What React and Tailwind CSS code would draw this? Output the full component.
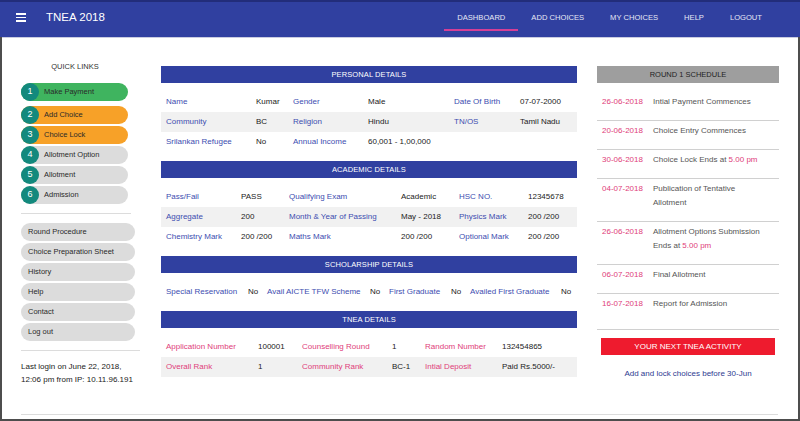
import React from 'react';

const font = { fontFamily: '"Liberation Sans", Arial, sans-serif' };

const navItems = ['DASHBOARD', 'ADD CHOICES', 'MY CHOICES', 'HELP', 'LOGOUT'];

const quickLinks = [
  { n: 1, label: 'Make Payment', bg: 'bg-[#3fb45f]' },
  { n: 2, label: 'Add Choice', bg: 'bg-[#f7a128]' },
  { n: 3, label: 'Choice Lock', bg: 'bg-[#f7a128]' },
  { n: 4, label: 'Allotment Option', bg: 'bg-[#dcdcdc]' },
  { n: 5, label: 'Allotment', bg: 'bg-[#dcdcdc]' },
  { n: 6, label: 'Admission', bg: 'bg-[#dcdcdc]' },
];

const otherLinks = ['Round Procedure', 'Choice Preparation Sheet', 'History', 'Help', 'Contact', 'Log out'];

const personal = [
  ['Name', 'Kumar', 'Gender', 'Male', 'Date Of Birth', '07-07-2000'],
  ['Community', 'BC', 'Religion', 'Hindu', 'TN/OS', 'Tamil Nadu'],
  ['Srilankan Refugee', 'No', 'Annual Income', '60,001 - 1,00,000', '', ''],
];

const academic = [
  ['Pass/Fail', 'PASS', 'Qualifying Exam', 'Academic', 'HSC NO.', '12345678'],
  ['Aggregate', '200', 'Month & Year of Passing', 'May - 2018', 'Physics Mark', '200 /200'],
  ['Chemistry Mark', '200 /200', 'Maths Mark', '200 /200', 'Optional Mark', '200 /200'],
];

const scholarship = [
  ['Special Reservation', 'No', 'Avail AICTE TFW Scheme', 'No', 'First Graduate', 'No', 'Availed First Graduate', 'No'],
];

const tnea = [
  ['Application Number', '100001', 'Counselling Round', '1', 'Random Number', '132454865'],
  ['Overall Rank', '1', 'Community Rank', 'BC-1', 'Intial Deposit', 'Paid Rs.5000/-'],
];

const schedule = [
  ['26-06-2018', ['Intial Payment Commences']],
  ['20-06-2018', ['Choice Entry Commences']],
  ['30-06-2018', ['Choice Lock Ends at ', <span key="t" className="text-[#e0407a]">5.00 pm</span>]],
  ['04-07-2018', ['Publication of Tentative', <br key="b" />, 'Allotment']],
  ['26-06-2018', ['Allotment Options Submission', <br key="b" />, 'Ends at ', <span key="t" className="text-[#e0407a]">5.00 pm</span>]],
  ['06-07-2018', ['Final Allotment']],
  ['16-07-2018', ['Report for Admission']],
];

function SectionHeader({ title }) {
  return (
    <div className="h-[17px] bg-[#3040a0] text-white text-[7.5px] flex items-center justify-center tracking-[0.1px]">
      {title}
    </div>
  );
}

function Section({ title, rows, cols, labelColor }) {
  return (
    <div className="mb-[9px]">
      <SectionHeader title={title} />
      <div className="mt-[9px]">
        {rows.map((row, i) => (
          <div key={i} className={`grid ${cols} h-[20px] items-center ${i % 2 === 1 ? 'bg-[#f1f1f1]' : ''}`}>
            {row.map((cell, j) => (
              <div key={j} className={`pl-[5px] whitespace-nowrap text-[8px] ${j % 2 === 0 ? labelColor : 'text-[#222]'}`}>
                {cell}
              </div>
            ))}
          </div>
        ))}
      </div>
    </div>
  );
}

export default function App() {
  return (
    <div className="w-[800px] h-[421px] bg-white flex flex-col overflow-hidden" style={font}>
      <header className="h-[37px] shrink-0 bg-[#3040a0] border-t-2 border-[#222d7a] flex items-start shadow-[0_1px_0_#c9cce0]">
        <div className="flex items-center h-[31px] pl-[16px]">
          <div className="flex flex-col gap-[2px] w-[10px]">
            <span className="h-[1.5px] bg-white" />
            <span className="h-[1.5px] bg-white" />
            <span className="h-[1.5px] bg-white" />
          </div>
          <span className="ml-[20px] text-white text-[11.5px]">TNEA 2018</span>
        </div>
        <nav className="ml-auto mr-[25px] flex">
          {navItems.map((item, i) => (
            <div
              key={item}
              className={`px-[13px] pt-[10px] pb-[5px] leading-[12px] text-[7.6px] text-[#e6e8f5] border-b-2 ${i === 0 ? 'border-[#d43f96]' : 'border-transparent'}`}
            >
              {item}
            </div>
          ))}
        </nav>
      </header>

      <div className="flex-1 flex flex-col border-x-2 border-b-2 border-[#4d4d4d]">
        <div className="flex-1 flex pl-[19px]">
          <aside className="w-[120px] pt-[23px]">
            <div className="text-center pr-[12px] text-[7.5px] leading-[14px] text-[#333] mb-[9px]">QUICK LINKS</div>
            <div className="w-[107px] flex flex-col gap-[2px]">
              {quickLinks.map((q, i) => (
                <div key={q.n} className={`h-[18px] rounded-full ${q.bg} flex items-center ${i === 0 ? 'mb-[3px]' : ''}`}>
                  <span className="w-[18px] h-[18px] rounded-full bg-[#13897d] text-white text-[9px] flex items-center justify-center">
                    {q.n}
                  </span>
                  <span className="ml-[5px] text-[7.5px] text-[#2a2a2a]">{q.label}</span>
                </div>
              ))}
            </div>
            <div className="mt-[9px] w-[110px] border-t border-[#dcdcdc]" />
            <div className="mt-[9px] w-[114px] flex flex-col gap-[2px]">
              {otherLinks.map((l) => (
                <div key={l} className="h-[18px] rounded-full bg-[#dcdcdc] flex items-center pl-[7px] text-[7.5px] text-[#2a2a2a]">
                  {l}
                </div>
              ))}
            </div>
            <div className="mt-[9px] w-[119px] border-t border-[#dcdcdc]" />
            <div className="mt-[9px] text-[8px] leading-[13px] text-[#222]">
              Last login on June 22, 2018,
              <br />
              12:06 pm from IP: 10.11.96.191
            </div>
          </aside>

          <main className="ml-[20px] w-[416px] pt-[29px]">
            <Section
              title="PERSONAL DETAILS"
              rows={personal}
              cols="grid-cols-[90px_37px_75px_86px_66px_62px]"
              labelColor="text-[#3d4db0]"
            />
            <Section
              title="ACADEMIC DETAILS"
              rows={academic}
              cols="grid-cols-[75px_48px_112px_58px_69px_54px]"
              labelColor="text-[#3d4db0]"
            />
            <Section
              title="SCHOLARSHIP DETAILS"
              rows={scholarship}
              cols="grid-cols-[82px_19px_103px_19px_62px_19px_91px_21px]"
              labelColor="text-[#3d4db0]"
            />
            <Section
              title="TNEA DETAILS"
              rows={tnea}
              cols="grid-cols-[92px_44px_90px_33px_77px_80px]"
              labelColor="text-[#e0407a]"
            />
          </main>

          <section className="ml-[20px] w-[182px] pt-[29px]">
            <div className="h-[17px] bg-[#9e9e9e] text-[#1f1f1f] text-[7.5px] flex items-center justify-center">
              ROUND 1 SCHEDULE
            </div>
            <div className="mt-[9px]">
              {schedule.map(([date, text], i) => (
                <div
                  key={i}
                  className={`flex pl-[5px] pt-[3px] text-[8px] leading-[14px] ${i === 0 ? '' : 'border-t border-[#d0d0d0]'} ${i === schedule.length - 1 ? 'pb-[18px]' : 'pb-[11px]'}`}
                >
                  <span className="w-[51px] shrink-0 text-[#e0407a]">{date}</span>
                  <span className="text-[#555]">{text}</span>
                </div>
              ))}
            </div>
            <div className="border-t border-[#d0d0d0]" />
            <div className="mt-[8px] mx-[4px] h-[17px] bg-[#ee1b2e] text-white text-[8px] flex items-center justify-center">
              YOUR NEXT TNEA ACTIVITY
            </div>
            <div className="mt-[13px] text-center text-[8px] text-[#2d3a90]">Add and lock choices before 30-Jun</div>
          </section>
        </div>
        <div className="ml-[19px] mr-[20px] h-[5px] border-t border-[#dcdcdc]" />
      </div>
    </div>
  );
}
